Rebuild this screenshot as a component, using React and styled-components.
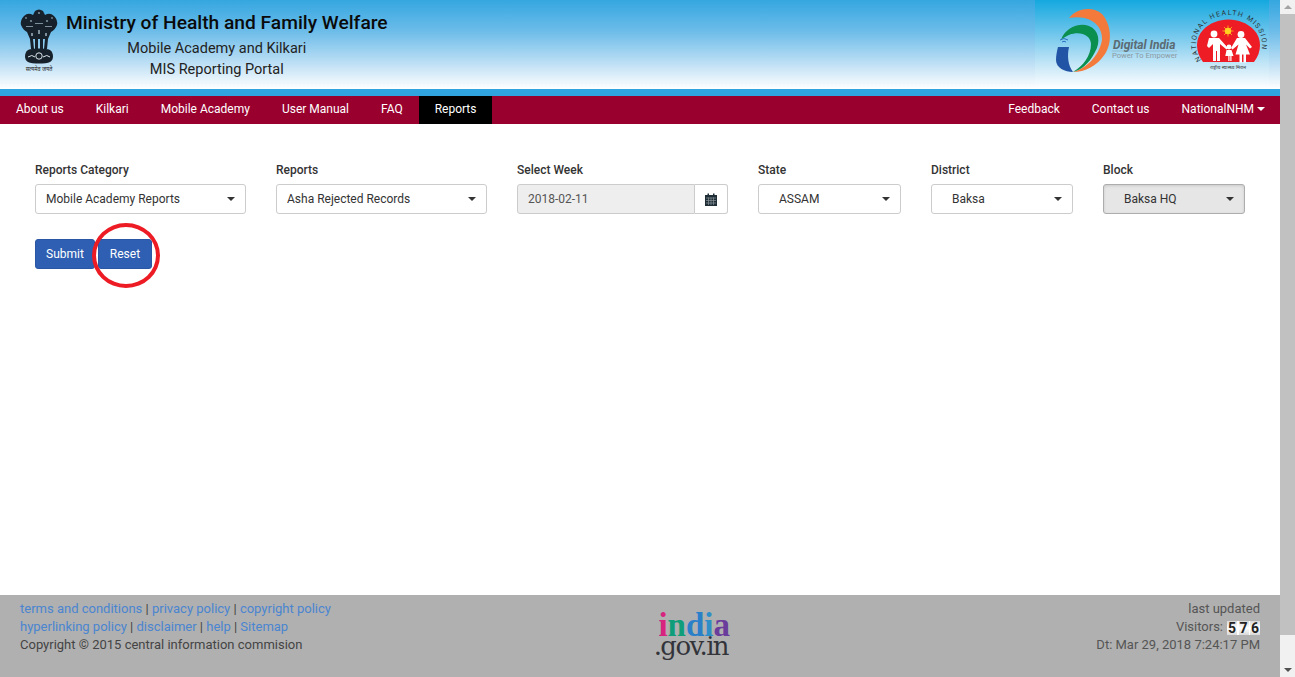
import React from 'react';
import styled, { createGlobalStyle } from 'styled-components';

const GlobalStyle = createGlobalStyle`
  html, body { margin: 0; padding: 0; height: 100%; overflow: hidden; background: #fff; }
  body { font-family: Roboto, "Liberation Sans", sans-serif; color: #333; }
  #root { height: 100%; }
`;

const Shell = styled.div`
  display: flex;
  height: 677px;
`;

const Page = styled.div`
  flex: 1;
  min-width: 0;
  display: flex;
  flex-direction: column;
`;

const ScrollTrack = styled.div`
  width: 15px;
  background: #f1f1f1;
  display: flex;
  flex-direction: column;
  align-items: center;
`;

const ScrollArrow = styled.div`
  width: 0;
  height: 0;
  margin: 5px 0;
  border-left: 4px solid transparent;
  border-right: 4px solid transparent;
  ${p => p.$down ? 'border-top: 4px solid #505050;' : 'border-bottom: 4px solid #a3a3a3;'}
`;

const ScrollThumb = styled.div`
  width: 15px;
  height: 621px;
  background: #c1c1c1;
`;

const ScrollGap = styled.div`
  flex: 1;
`;

const Header = styled.header`
  height: 89px;
  display: flex;
  justify-content: space-between;
  background: linear-gradient(to bottom, #35a7e0 0%, #6cbce9 35%, #bfe0f5 72%, #ffffff 100%);
`;

const Brand = styled.div`
  display: flex;
  padding: 8px 0 0 20px;
`;

const BrandText = styled.div`
  margin-left: 8px;
  display: flex;
  flex-direction: column;
  align-items: center;
  padding-right: 20px;
`;

const Title = styled.h1`
  margin: 3px -20px 3px 0;
  font-size: 19.2px;
  line-height: 24px;
  font-weight: 500;
  color: #0a0a0a;
  white-space: nowrap;
`;

const Subtitle = styled.div`
  font-size: 14.5px;
  line-height: 21px;
  color: #222;
  white-space: nowrap;
`;

const LogoPanel = styled.div`
  width: 234px;
  margin-right: 11px;
  background: linear-gradient(to bottom, #14a8df 0%, #6fc6ec 38%, #c4e6f7 72%, #ffffff 100%);
`;

const BlueStrip = styled.div`
  height: 7px;
  background: #2fa4df;
`;

const Nav = styled.nav`
  height: 28px;
  display: flex;
  justify-content: space-between;
  background: #99002e;
`;

const NavGroup = styled.div`
  display: flex;
`;

const NavItem = styled.a`
  display: flex;
  align-items: center;
  padding: 0 ${p => p.$tight ? '15px' : '16px'} 3px 16px;
  font-size: 12px;
  color: #fff;
  background: ${p => p.$active ? '#000' : 'transparent'};
  white-space: nowrap;
`;

const NavCaret = styled.span`
  margin-left: 3px;
  margin-top: 1px;
  border-left: 4px solid transparent;
  border-right: 4px solid transparent;
  border-top: 4px solid #fff;
`;

const Main = styled.main`
  flex: 1;
  padding: 39px 35px 0;
`;

const FilterRow = styled.div`
  display: grid;
  grid-template-columns: 211px 211px 211px 143px 142px 142px;
  column-gap: 30px;
`;

const Field = styled.div`
  display: flex;
  flex-direction: column;
`;

const Label = styled.label`
  font-size: 12px;
  line-height: 15px;
  font-weight: 500;
  color: #333;
  margin-bottom: 6px;
`;

const Select = styled.div`
  box-sizing: border-box;
  height: 30px;
  display: flex;
  align-items: center;
  justify-content: space-between;
  padding: 0 10px 1px ${p => p.$indent ? '20px' : '10px'};
  font-size: 12px;
  color: #333;
  background: ${p => p.$pressed ? '#e6e6e6' : '#fff'};
  border: 1px solid ${p => p.$pressed ? '#adadad' : '#ccc'};
  border-radius: 3px;
  box-shadow: ${p => p.$pressed ? 'inset 0 1px 3px rgba(0,0,0,.125)' : 'none'};
`;

const Caret = styled.span`
  margin-top: 1px;
  border-left: 4px solid transparent;
  border-right: 4px solid transparent;
  border-top: 4px solid #333;
`;

const DateGroup = styled.div`
  display: flex;
  height: 30px;
`;

const DateInput = styled.div`
  box-sizing: border-box;
  flex: 1;
  display: flex;
  align-items: center;
  padding: 0 10px 1px;
  font-size: 12px;
  color: #555;
  background: #eee;
  border: 1px solid #ccc;
  border-radius: 3px 0 0 3px;
`;

const DateButton = styled.div`
  box-sizing: border-box;
  width: 33px;
  display: flex;
  align-items: center;
  justify-content: center;
  border: 1px solid #ccc;
  border-left: 0;
  border-radius: 0 3px 3px 0;
`;

const Actions = styled.div`
  display: flex;
  margin-top: 25px;
`;

const ActionButton = styled.button`
  position: relative;
  box-sizing: border-box;
  height: 30px;
  padding: 0 ${p => p.$wide ? '11px' : '10px'} 1px;
  margin-right: 3px;
  font-family: inherit;
  font-size: 12px;
  color: #fff;
  background: #2e5fb3;
  border: 1px solid #2a56a3;
  border-radius: 3px;
`;

const RedCircle = styled.span`
  position: absolute;
  left: -7px;
  top: -17px;
  box-sizing: border-box;
  width: 68px;
  height: 65px;
  border: 4px solid #ed1c24;
  border-radius: 50%;
  pointer-events: none;
`;

const Footer = styled.footer`
  box-sizing: border-box;
  height: 82px;
  display: grid;
  grid-template-columns: 635px 75px 1fr;
  padding: 5px 20px 0;
  background: #b0b0b0;
  font-size: 13px;
  line-height: 18px;
  color: #444;
`;

const FooterLeft = styled.div``;

const FooterLink = styled.a`
  color: #4a85d0;
`;

const FooterLogo = styled.div`
  display: flex;
  flex-direction: column;
  align-items: flex-end;
  padding-top: 13px;
`;

const LogoTop = styled.div`
  font-family: "Liberation Serif", serif;
  font-weight: 700;
  font-size: 33px;
  line-height: 24px;
`;

const LogoBottom = styled.div`
  margin-right: 2px;
  font-family: "DejaVu Serif", serif;
  font-size: 26px;
  line-height: 19px;
  letter-spacing: -1.6px;
  color: #33343a;
`;

const LogoLetter = styled.span`
  color: ${p => p.$color};
`;

const FooterRight = styled.div`
  text-align: right;
  color: #555;
`;

const Counter = styled.span`
  display: inline-flex;
  gap: 1.5px;
  margin-left: 4px;
  vertical-align: -2px;
  background: #fff;
`;

const Digit = styled.span`
  width: 10px;
  height: 14px;
  font-size: 14px;
  line-height: 15px;
  font-weight: 700;
  text-align: center;
  color: #222;
  background: linear-gradient(to bottom, #d8d8d8, #fff 50%, #d8d8d8);
`;

const CalendarIcon = () => (
  <svg width="12" height="13" viewBox="0 0 12 13">
    <path d="M0 2 H2.5 V0.5 H4 V2 H8 V0.5 H9.5 V2 H12 V13 H0 Z" fill="#1f2d36" />
    <path d="M1 5 H11 M1 7.5 H11 M1 10 H11 M3.5 4.5 V12 M6 4.5 V12 M8.5 4.5 V12" stroke="#8b959b" strokeWidth="0.7" />
  </svg>
);

const Emblem = () => (
  <svg width="38" height="68" viewBox="0 0 38 68">
    <g fill="#16212b">
      <path d="M15 3 Q19 0 23 3 L25 7 Q30 4 34 8 Q38 12 37 17 Q35 22 31 24 L28 31 L10 31 L7 24 Q3 22 1 17 Q0 12 4 8 Q8 4 13 7 Z" />
      <path d="M10 31 h3 l1 10 h-3 z M15 31 h3 v10 h-3 z M20 31 h3 v10 h-3 z M25 31 h3 l-1 10 h-3 z" />
      <path d="M8 42 C12 40 26 40 30 42 C34 45 34 52 30 54 C26 56 12 56 8 54 C4 52 4 45 8 42 Z" />
    </g>
    <g fill="#7d909b">
      <circle cx="6" cy="10" r="0.9" />
      <circle cx="11" cy="13" r="1.1" />
      <circle cx="19" cy="5" r="1.1" />
      <circle cx="27" cy="13" r="1.1" />
      <circle cx="32" cy="10" r="0.9" />
      <path d="M6 18 h7 v0.9 h-7 z M15 15 h8 v0.9 h-8 z M25 18 h7 v0.9 h-7 z M11 25 h2 v3 h-2 z M18 22 h2 v4 h-2 z M25 25 h2 v3 h-2 z" />
    </g>
    <circle cx="19" cy="48" r="3.2" fill="none" stroke="#dde6ec" strokeWidth="1" />
    <path d="M8 49 q4 -3 7 0 M23 49 q4 -3 7 0" fill="none" stroke="#dde6ec" strokeWidth="1" />
    <text x="19" y="63" fontSize="5.5" textAnchor="middle" fill="#222" fontFamily="'Noto Sans', sans-serif">सत्यमेव जयते</text>
  </svg>
);

const PartnerLogos = () => (
  <svg width="234" height="89" viewBox="0 0 234 89">
    <path d="M34 18 C42 8 58 6 67 14 C76 24 78 42 70 54 C62 66 50 72 38 72 C52 68 64 56 67 40 C68 28 58 14 34 18 Z" fill="#f47a3c" />
    <path d="M26 40 C30 28 44 22 54 26 C64 30 66 42 60 52 C54 64 46 70 38 72 C48 66 56 56 56 44 C56 34 40 28 26 40 Z" fill="#0b8f4f" />
    <path d="M23 47 L34 47 C32 56 33 65 38 72 C30 72 21 68 21 60 C21 55 22 51 23 47 Z" fill="#2154a5" />
    <path d="M25 40 q4 -3 8 0 M27 42 q2 -1.5 4 0" fill="none" stroke="#2a6fc0" strokeWidth="1" />
    <text x="78" y="49" fontSize="12" fontWeight="700" fontStyle="italic" fill="#5b6b73" fontFamily="Roboto, sans-serif">Digital India</text>
    <path d="M77 51 H142" stroke="#8fa3ad" strokeWidth="0.5" />
    <text x="77" y="58" fontSize="7.6" fill="#8c9aa2" fontFamily="Roboto, sans-serif">Power To Empower</text>

    <defs>
      <path id="nhm-arc" d="M166.5 60 A33 29 0 1 1 221.5 60" />
    </defs>
    <path d="M168 62 C160 52 160 38 168 30 C181 16 206 16 219 30 C227 38 227 52 219 62 Z" fill="#ee1c25" />
    <text fontSize="7" fill="#2c3a40" letterSpacing="1.3" fontFamily="Roboto, sans-serif">
      <textPath href="#nhm-arc">NATIONAL HEALTH MISSION</textPath>
    </text>
    <circle cx="193" cy="31" r="3.2" fill="#ffd21f" />
    <path d="M193 25.5 v11 M187.5 31 h11 M189 27 l8 8 M197 27 l-8 8" stroke="#ffd21f" strokeWidth="0.7" />
    <g fill="#fff">
      <circle cx="179" cy="34" r="3.4" />
      <path d="M174 38 h10 l9 10 -1.5 1.5 -6.5 -5.5 v17 h-3 v-10 h-1 v10 h-3 v-17 l-4 4 -2 -2 z" />
      <circle cx="206" cy="34.5" r="3.4" />
      <path d="M202 38 h8 l7 9 -2 1.5 -4 -4 4 10 h-4 v8 h-2.5 v-8 h-1.5 v8 h-2.5 v-8 h-4 l3 -10 -6 5 -1.5 -1.5 z" />
      <circle cx="194" cy="47" r="2.4" />
      <path d="M191.5 50 h5 l2 6 h-2 v5 h-1.2 v-5 h-0.8 v5 h-1.2 v-5 h-3 z" />
    </g>
    <text x="193" y="69" fontSize="5" textAnchor="middle" fill="#333" fontFamily="'Noto Sans', sans-serif">राष्ट्रीय स्वास्थ्य मिशन</text>
  </svg>
);

const leftNav = ['About us', 'Kilkari', 'Mobile Academy', 'User Manual', 'FAQ'];

const App = () => (
  <Shell>
    <GlobalStyle />
    <Page>
      <Header>
        <Brand>
          <Emblem />
          <BrandText>
            <Title>Ministry of Health and Family Welfare</Title>
            <Subtitle>Mobile Academy and Kilkari</Subtitle>
            <Subtitle>MIS Reporting Portal</Subtitle>
          </BrandText>
        </Brand>
        <LogoPanel><PartnerLogos /></LogoPanel>
      </Header>
      <BlueStrip />
      <Nav>
        <NavGroup>
          {leftNav.map(item => <NavItem key={item}>{item}</NavItem>)}
          <NavItem $active>Reports</NavItem>
        </NavGroup>
        <NavGroup>
          <NavItem>Feedback</NavItem>
          <NavItem>Contact us</NavItem>
          <NavItem $tight>NationalNHM<NavCaret /></NavItem>
        </NavGroup>
      </Nav>
      <Main>
        <FilterRow>
          <Field>
            <Label>Reports Category</Label>
            <Select>Mobile Academy Reports<Caret /></Select>
          </Field>
          <Field>
            <Label>Reports</Label>
            <Select>Asha Rejected Records<Caret /></Select>
          </Field>
          <Field>
            <Label>Select Week</Label>
            <DateGroup>
              <DateInput>2018-02-11</DateInput>
              <DateButton><CalendarIcon /></DateButton>
            </DateGroup>
          </Field>
          <Field>
            <Label>State</Label>
            <Select $indent>ASSAM<Caret /></Select>
          </Field>
          <Field>
            <Label>District</Label>
            <Select $indent>Baksa<Caret /></Select>
          </Field>
          <Field>
            <Label>Block</Label>
            <Select $indent $pressed>Baksa HQ<Caret /></Select>
          </Field>
        </FilterRow>
        <Actions>
          <ActionButton>Submit</ActionButton>
          <ActionButton $wide>Reset<RedCircle /></ActionButton>
        </Actions>
      </Main>
      <Footer>
        <FooterLeft>
          <div>
            <FooterLink>terms and conditions</FooterLink> | <FooterLink>privacy policy</FooterLink> | <FooterLink>copyright policy</FooterLink>
          </div>
          <div>
            <FooterLink>hyperlinking policy</FooterLink> | <FooterLink>disclaimer</FooterLink> | <FooterLink>help</FooterLink> | <FooterLink>Sitemap</FooterLink>
          </div>
          <div>Copyright © 2015 central information commision</div>
        </FooterLeft>
        <FooterLogo>
          <LogoTop>
            <LogoLetter $color="#d6247f">i</LogoLetter>
            <LogoLetter $color="#0f9d7a">n</LogoLetter>
            <LogoLetter $color="#2a7fc9">d</LogoLetter>
            <LogoLetter $color="#2e8fc7">i</LogoLetter>
            <LogoLetter $color="#6a3c9c">a</LogoLetter>
          </LogoTop>
          <LogoBottom>.gov.in</LogoBottom>
        </FooterLogo>
        <FooterRight>
          <div>last updated</div>
          <div>
            Visitors:
            <Counter><Digit>5</Digit><Digit>7</Digit><Digit>6</Digit></Counter>
          </div>
          <div>Dt: Mar 29, 2018 7:24:17 PM</div>
        </FooterRight>
      </Footer>
    </Page>
    <ScrollTrack>
      <ScrollArrow />
      <ScrollThumb />
      <ScrollGap />
      <ScrollArrow $down />
    </ScrollTrack>
  </Shell>
);

export default App;
